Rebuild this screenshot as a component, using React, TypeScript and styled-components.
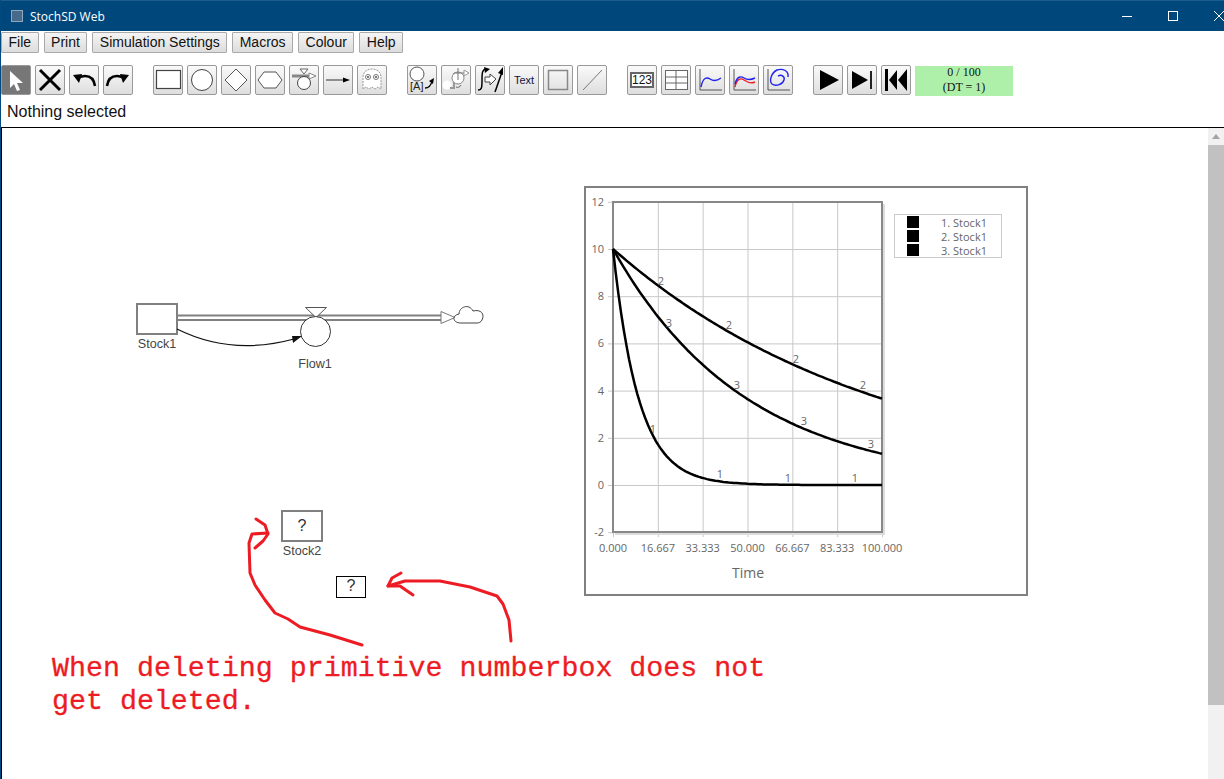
import React from "react";
import styled, { createGlobalStyle } from "styled-components";

const GlobalStyle = createGlobalStyle`
  html, body {
    margin: 0;
    padding: 0;
    height: 100%;
    overflow: hidden;
    background: white;
  }
`;

const MENU = ["File", "Print", "Simulation Settings", "Macros", "Colour", "Help"];

// page coords of the chart svg origin, the plot numbers below were read off the page
const OX = 586;
const OY = 188;
const X0 = 613;
const Y0 = 485;
const sx = (t: number) => X0 + (t / 100) * 269 - OX;
const sy = (v: number) => Y0 - v * 23.6 - OY;

// euler integration with DT = 1, same as the simulation in the picture
const curve = (tau: number) => {
  let v = 10;
  let d = `M${sx(0)} ${sy(v)}`;
  for (let t = 1; t <= 100; t++) {
    v = v - v / tau;
    d += ` L${sx(t).toFixed(1)} ${sy(v).toFixed(1)}`;
  }
  return d;
};

const Y_TICKS = [12, 10, 8, 6, 4, 2, 0, -2];
const X_TICKS = ["0.000", "16.667", "33.333", "50.000", "66.667", "83.333", "100.000"];
const CURVE_LABELS: [string, number, number][] = [
  ["2", 661, 285], ["2", 729, 329], ["2", 796, 363], ["2", 863, 389],
  ["3", 669, 327], ["3", 737, 389], ["3", 804, 425], ["3", 871, 448],
  ["1", 653, 433], ["1", 720, 478], ["1", 788, 482], ["1", 855, 482],
];

const App = () => {
  return (
    <Window>
      <GlobalStyle />
      <TitleBar>
        <AppIcon />
        <Title>StochSD Web</Title>
        <WindowControls>
          <WindowButton>
            <svg width="12" height="12"><path d="M1 6.5h10" stroke="white" /></svg>
          </WindowButton>
          <WindowButton>
            <svg width="12" height="12"><rect x="1.5" y="1.5" width="9" height="9" fill="none" stroke="white" /></svg>
          </WindowButton>
          <WindowButton>
            <svg width="12" height="12"><path d="M1 1l10 10M11 1L1 11" stroke="white" /></svg>
          </WindowButton>
        </WindowControls>
      </TitleBar>

      <MenuBar>
        {MENU.map((m) => (
          <MenuButton key={m}>{m}</MenuButton>
        ))}
      </MenuBar>

      <Toolbar>
        <ToolGroup>
          <ToolButton $active>
            <svg width="28" height="28">
              <path d="M8 5v17l4-4 3 7 3-1-3-7h6z" fill="white" />
            </svg>
          </ToolButton>
          <ToolButton>
            <svg width="28" height="28"><path d="M4 4l20 20M24 4L4 24" stroke="black" strokeWidth="3" /></svg>
          </ToolButton>
          <ToolButton>
            <svg width="28" height="28">
              <path d="M25 20c-1-7-5-10-10-10-3 0-5 1-7 2" fill="none" stroke="black" strokeWidth="2.5" />
              <path d="M3 9l9-1-3 9z" fill="black" />
            </svg>
          </ToolButton>
          <ToolButton>
            <svg width="28" height="28">
              <path d="M3 20c1-7 5-10 10-10 3 0 5 1 7 2" fill="none" stroke="black" strokeWidth="2.5" />
              <path d="M25 9l-9-1 3 9z" fill="black" />
            </svg>
          </ToolButton>
        </ToolGroup>

        <ToolGroup>
          <ToolButton>
            <svg width="28" height="28"><rect x="2.5" y="4.5" width="24" height="18" fill="white" stroke="#444" strokeWidth="1.2" /></svg>
          </ToolButton>
          <ToolButton>
            <svg width="28" height="28"><circle cx="14" cy="14" r="10.5" fill="white" stroke="#444" /></svg>
          </ToolButton>
          <ToolButton>
            <svg width="28" height="28"><path d="M14 3l11 11-11 11L3 14z" fill="white" stroke="#555" /></svg>
          </ToolButton>
          <ToolButton>
            <svg width="28" height="28"><path d="M8 6h12l6 8-6 8H8l-6-8z" fill="white" stroke="#555" /></svg>
          </ToolButton>
          <ToolButton>
            <svg width="28" height="28">
              <path d="M2 10h18" stroke="#888" strokeWidth="3" />
              <path d="M19 7l7 3-7 3z" fill="white" stroke="#888" />
              <path d="M10 3h8l-4 5z" fill="white" stroke="#666" />
              <circle cx="14" cy="17" r="6.5" fill="white" stroke="#444" />
            </svg>
          </ToolButton>
          <ToolButton>
            <svg width="28" height="28">
              <path d="M2 14h19" stroke="#333" />
              <path d="M19 11.5l7 2.5-7 2.5z" fill="black" />
            </svg>
          </ToolButton>
          <ToolButton>
            <svg width="28" height="28">
              <path d="M5 23V11c0-5 4-8 9-8s9 3 9 8v12l-3-2-3 2-3-2-3 2-3-2z" fill="white" stroke="#999" strokeDasharray="2 1" />
              <circle cx="10" cy="11" r="2.5" fill="white" stroke="#777" />
              <circle cx="18" cy="11" r="2.5" fill="white" stroke="#777" />
              <circle cx="10" cy="11" r="0.9" fill="#444" />
              <circle cx="18" cy="11" r="0.9" fill="#444" />
            </svg>
          </ToolButton>
        </ToolGroup>

        <ToolGroup>
          <ToolButton>
            <svg width="28" height="28">
              <circle cx="9" cy="8" r="7" fill="white" stroke="#555" />
              <IconText x="2" y="24" fontSize="11" fill="#222">[A]</IconText>
              <path d="M17 22c4 0 5-2 7-6" fill="none" stroke="black" strokeWidth="1.3" />
              <path d="M26 12l-1 6-4-3z" fill="black" />
            </svg>
          </ToolButton>
          <ToolButton>
            <svg width="28" height="28">
              <circle cx="5" cy="19" r="4.5" fill="white" />
              <path d="M8 22h4V8h5" fill="none" stroke="#999" strokeWidth="2" />
              <circle cx="16" cy="12" r="6" fill="white" stroke="#888" />
              <path d="M16 2v12M12 7h12" stroke="#777" />
              <path d="M22 4l5 3-5 3z" fill="white" stroke="#999" />
              <path d="M14 21c2 1 4 0 5-2" fill="none" stroke="#666" />
            </svg>
          </ToolButton>
          <ToolButton>
            <svg width="28" height="28">
              <path d="M2 24c4 0 4-3 4-10s0-11 5-11" fill="none" stroke="black" strokeWidth="1.5" />
              <path d="M8 1l6 2-5 4z" fill="black" />
              <path d="M9 11h5V8l6 5-6 6v-3H9z" fill="white" stroke="#444" />
              <path d="M19 26l7-20" stroke="black" strokeWidth="1.5" />
              <path d="M27 1l0 8-5-2z" fill="black" />
            </svg>
          </ToolButton>
          <ToolButton>
            <IconLabel>Text</IconLabel>
          </ToolButton>
          <ToolButton>
            <svg width="28" height="28"><rect x="4.5" y="4.5" width="19" height="19" fill="none" stroke="#888" strokeWidth="1.5" /></svg>
          </ToolButton>
          <ToolButton>
            <svg width="28" height="28"><path d="M5 24L24 4" stroke="#777" /></svg>
          </ToolButton>
        </ToolGroup>

        <ToolGroup>
          <ToolButton>
            <NumberIcon>123</NumberIcon>
          </ToolButton>
          <ToolButton>
            <svg width="28" height="28">
              <rect x="3.5" y="4.5" width="22" height="19" fill="white" stroke="#666" />
              <path d="M3 11h22M3 17h22M14 4v20" stroke="#666" />
            </svg>
          </ToolButton>
          <ToolButton>
            <svg width="28" height="28">
              <path d="M4 3v21h22" fill="none" stroke="#555" />
              <path d="M5 21c2-10 6-10 9-8s7 2 11-1" fill="none" stroke="#2222ee" strokeWidth="1.4" />
            </svg>
          </ToolButton>
          <ToolButton>
            <svg width="28" height="28">
              <path d="M4 3v21h22" fill="none" stroke="#555" />
              <path d="M5 21c2-9 6-9 9-7s7 4 11 2" fill="none" stroke="#ee2222" strokeWidth="1.4" />
              <path d="M5 18c2-8 6-8 9-6s7 2 11 0" fill="none" stroke="#2222ee" strokeWidth="1.4" />
            </svg>
          </ToolButton>
          <ToolButton>
            <svg width="28" height="28">
              <path d="M4 3v21h22" fill="none" stroke="#555" />
              <path d="M14 10c4-2 7 1 6 4-1 4-8 7-12 4-3-3-1-11 5-14 6-2 12 1 11 7" fill="none" stroke="#2222ee" strokeWidth="1.4" />
            </svg>
          </ToolButton>
        </ToolGroup>

        <ToolGroup>
          <ToolButton>
            <svg width="28" height="28"><path d="M6 4l19 10L6 24z" fill="black" /></svg>
          </ToolButton>
          <ToolButton>
            <svg width="28" height="28"><path d="M4 5l16 9-16 9z" fill="black" /><rect x="22" y="5" width="2" height="18" fill="#222" /></svg>
          </ToolButton>
          <ToolButton>
            <svg width="28" height="28">
              <rect x="3" y="3" width="3" height="22" fill="black" />
              <path d="M15 4v20L7 14zM25 3v22L16 14z" fill="black" />
            </svg>
          </ToolButton>
          <TimeBox>
            <TimeText>
              0 / 100
              <br />
              (DT = 1)
            </TimeText>
          </TimeBox>
        </ToolGroup>
      </Toolbar>

      <Status>Nothing selected</Status>

      <CanvasRow>
        <Canvas>
          <DiagramSvg width="1206" height="651" viewBox="2 128 1206 651">
            {/* stock and flow */}
            <rect x="137" y="304" width="40" height="30" fill="white" stroke="#808080" strokeWidth="2" />
            <path d="M177 315.5H446M177 320H446" stroke="#808080" strokeWidth="2" />
            <path d="M441 311.5l14 6-14 6z" fill="white" stroke="#777" />
            <path d="M461 323c-9 0-9-8-2-9 0-7 10-11 14-3 8-2 12 3 9 9-1 2-3 3-5 3z" fill="white" stroke="#444" />
            <path d="M305.5 307.5h21l-10.5 10z" fill="white" stroke="#555" />
            <circle cx="315.5" cy="331.5" r="15" fill="white" stroke="#333" />
            <path d="M177 329c40 20 80 20 117 10" fill="none" stroke="#111" strokeWidth="1.2" />
            <path d="M302 336l-9 7-1-7z" fill="#111" />
            <NodeLabel x="157" y="348">Stock1</NodeLabel>
            <NodeLabel x="315" y="368">Flow1</NodeLabel>

            {/* orphaned stock and numberbox */}
            <rect x="282" y="511" width="40" height="30" fill="white" stroke="#808080" strokeWidth="2" />
            <QuestionMark x="302" y="531">?</QuestionMark>
            <NodeLabel x="302" y="555">Stock2</NodeLabel>
            <rect x="336.5" y="576.5" width="29" height="21" fill="white" stroke="black" />
            <QuestionMark x="351" y="591">?</QuestionMark>

            {/* red annotation */}
            <RedStroke d="M362 645L330 635 300 627 288 619 275 613 265 600 255 585 250 573 249 543 252 534 268 533" />
            <RedStroke d="M256 519L265 525 268 534 263 541 255 548" />
            <RedStroke d="M511 641L509 620 503 604 497 596 470 587 440 581 405 581 388 586" />
            <RedStroke d="M401 573L392 578 388 586 400 586 413 595" />
          </DiagramSvg>

          <Note>
            When deleting primitive numberbox does not
            <br />
            get deleted.
          </Note>

          <ChartFrame>
            <ChartSvg width="308" height="406">
              {Y_TICKS.map((v) => (
                <g key={v}>
                  <path d={`M${sx(0) - 5} ${sy(v) + 0.5}H${sx(100)}`} stroke="#c8c8c8" />
                  <ChartText x={sx(0) - 9} y={sy(v) + 4} textAnchor="end">{v}</ChartText>
                </g>
              ))}
              {X_TICKS.map((t, i) => (
                <g key={t}>
                  <path d={`M${sx((i * 100) / 6) + 0.5} 14V349`} stroke="#c8c8c8" />
                  <ChartText x={sx((i * 100) / 6)} y={364} textAnchor="middle">{t}</ChartText>
                </g>
              ))}
              <rect x="27" y="14" width="269" height="330" fill="none" stroke="#888" strokeWidth="2" />
              <path d="M298 16V346H29" fill="none" stroke="#ddd" strokeWidth="2" />
              <path d={curve(10)} fill="none" stroke="black" strokeWidth="2.5" />
              <path d={curve(100)} fill="none" stroke="black" strokeWidth="2.5" />
              <path d={curve(50)} fill="none" stroke="black" strokeWidth="2.5" />
              {CURVE_LABELS.map(([l, x, y]) => (
                <ChartText key={`${l}${x}`} x={x - OX} y={y - OY} textAnchor="middle">{l}</ChartText>
              ))}
              <AxisTitle x="162" y="390" textAnchor="middle">Time</AxisTitle>
            </ChartSvg>
            <Legend>
              {[1, 2, 3].map((n) => (
                <LegendRow key={n}>
                  <Swatch />
                  <span>{n}. Stock1</span>
                </LegendRow>
              ))}
            </Legend>
          </ChartFrame>
        </Canvas>

        <Scrollbar>
          <ScrollArrow />
          <ScrollThumb />
        </Scrollbar>
      </CanvasRow>
    </Window>
  );
};

const Window = styled.div`
  width: 1224px;
  height: 779px;
  box-sizing: border-box;
  border-left: 1px solid #004a7f;
  display: flex;
  flex-direction: column;
  overflow: hidden;
  background: white;
  font-family: "Liberation Sans", Arial, sans-serif;
`;

const TitleBar = styled.div`
  height: 31px;
  flex: none;
  display: flex;
  align-items: center;
  margin-left: -1px;
  padding-left: 11px;
  background: #00477c;
  border-top: 1px solid #1d5d8e;
  box-sizing: border-box;
`;

const AppIcon = styled.div`
  width: 10px;
  height: 10px;
  border: 1px solid #8fa8bd;
  background: #47698a;
`;

const Title = styled.span`
  margin-left: 7px;
  font-family: "Open Sans", sans-serif;
  font-size: 12px;
  color: white;
`;

const WindowControls = styled.div`
  margin-left: auto;
  display: flex;
  margin-right: -18px;
`;

const WindowButton = styled.div`
  width: 46px;
  height: 30px;
  display: flex;
  align-items: center;
  justify-content: center;
`;

const MenuBar = styled.div`
  height: 21px;
  flex: none;
  display: flex;
  gap: 5px;
  margin-top: 1px;
`;

const MenuButton = styled.button`
  box-sizing: border-box;
  height: 21px;
  padding: 0 6.5px 2px;
  border: 1px solid #aaa;
  border-radius: 1px;
  background: linear-gradient(#f5f5f5, #dcdcdc);
  font-family: "Liberation Sans", Arial, sans-serif;
  font-size: 14px;
  color: #111;
`;

const Toolbar = styled.div`
  display: flex;
  flex: none;
  gap: 20px;
  margin-top: 12px;
  padding-left: 1px;
  margin-left: -1px;
  height: 31px;
`;

const ToolGroup = styled.div`
  display: flex;
  gap: 4px;
`;

const ToolButton = styled.div<{ $active?: boolean }>`
  box-sizing: border-box;
  width: 30px;
  height: 30px;
  display: flex;
  align-items: center;
  justify-content: center;
  border: 1px solid #999;
  border-radius: 2px;
  background: ${(p) => (p.$active ? "#777" : "linear-gradient(#fafafa, #dedede)")};
`;

const IconText = styled.text`
  font-family: "Liberation Sans", Arial, sans-serif;
`;

const IconLabel = styled.span`
  font-size: 11px;
  color: #101040;
`;

const NumberIcon = styled.span`
  box-sizing: border-box;
  width: 24px;
  height: 16px;
  line-height: 13px;
  text-align: center;
  border: 2px solid #666;
  background: white;
  font-size: 12px;
  color: #111;
`;

const TimeBox = styled.div`
  box-sizing: border-box;
  width: 98px;
  height: 30px;
  margin-top: 1px;
  background: #aef0aa;
  text-align: center;
  font-family: "Liberation Serif", serif;
  font-size: 12px;
  line-height: 15px;
  color: #111;
`;

const TimeText = styled.div`
  margin-top: -1px;
`;

const Status = styled.div`
  flex: none;
  height: 31px;
  padding-left: 6px;
  padding-top: 6px;
  box-sizing: border-box;
  font-size: 16px;
  line-height: 20px;
  color: #111;
`;

const CanvasRow = styled.div`
  flex: 1;
  display: flex;
  border-top: 1px solid black;
  min-height: 0;
`;

const Canvas = styled.div`
  position: relative;
  flex: 1;
  border-left: 1px solid black;
  overflow: hidden;
`;

const DiagramSvg = styled.svg`
  position: absolute;
  left: 0;
  top: 0;
`;

const NodeLabel = styled.text`
  font-family: "Liberation Sans", Arial, sans-serif;
  font-size: 12.6px;
  fill: #444;
  text-anchor: middle;
`;

const QuestionMark = styled.text`
  font-family: "Liberation Sans", Arial, sans-serif;
  font-size: 16px;
  fill: #333;
  text-anchor: middle;
`;

const RedStroke = styled.path`
  fill: none;
  stroke: #ed1c24;
  stroke-width: 3;
  stroke-linecap: round;
  stroke-linejoin: round;
`;

const Note = styled.div`
  position: absolute;
  left: 50px;
  top: 524px;
  font-family: "Liberation Mono", monospace;
  font-size: 28.3px;
  line-height: 33px;
  color: #ed1c24;
  -webkit-text-stroke: 0.3px #ed1c24;
  white-space: nowrap;
`;

const ChartFrame = styled.div`
  position: absolute;
  left: 582px;
  top: 58px;
  box-sizing: border-box;
  width: 444px;
  height: 410px;
  display: flex;
  align-items: flex-start;
  border: 2px solid #808080;
  background: white;
`;

const ChartSvg = styled.svg`
  flex: none;
  overflow: visible;
`;

const ChartText = styled.text`
  font-family: "Open Sans", sans-serif;
  font-size: 11px;
  fill: #666;
`;

const AxisTitle = styled.text`
  font-family: "Open Sans", sans-serif;
  font-size: 14px;
  fill: #666;
`;

const Legend = styled.div`
  box-sizing: border-box;
  width: 108px;
  margin-top: 26px;
  border: 1px solid #ccc;
  font-family: "Open Sans", sans-serif;
  font-size: 11px;
  color: #666;
`;

const LegendRow = styled.div`
  display: flex;
  align-items: center;
  height: 14px;
  padding-left: 12px;

  span {
    margin-left: 22px;
  }
`;

const Swatch = styled.div`
  width: 12px;
  height: 12px;
  background: black;
`;

const Scrollbar = styled.div`
  flex: none;
  width: 16px;
  background: #f1f1f1;
  display: flex;
  flex-direction: column;
  align-items: stretch;
`;

const ScrollArrow = styled.div`
  width: 0;
  height: 0;
  margin: 6px auto 6px;
  border-left: 4px solid transparent;
  border-right: 4px solid transparent;
  border-bottom: 5px solid #a3a3a3;
`;

const ScrollThumb = styled.div`
  height: 560px;
  background: #c1c1c1;
`;

export default App;
